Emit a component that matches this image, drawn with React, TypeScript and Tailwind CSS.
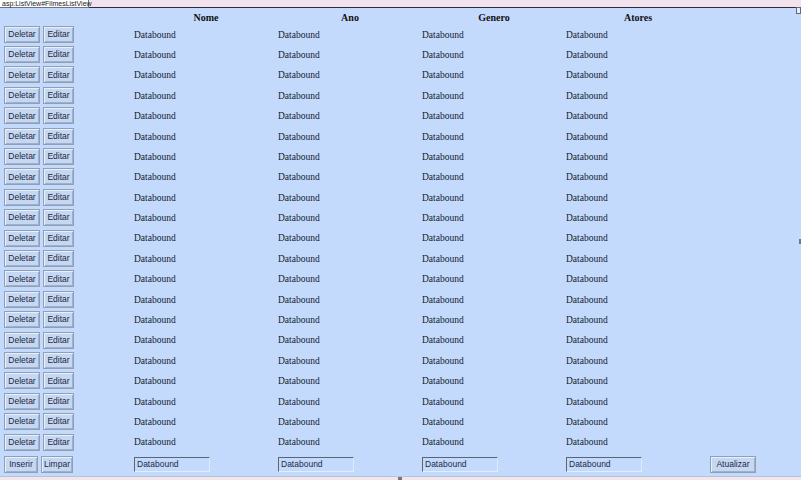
import React from "react";

// Designer view of an asp:ListView (Filmes) — bound placeholder rows.
const COLUMNS = ["Nome", "Ano", "Genero", "Atores"];
const ROWS = Array.from({ length: 21 }, (_, i) => i);

const serif = { fontFamily: '"Liberation Serif", "Times New Roman", serif' };
const sans = { fontFamily: '"Liberation Sans", Arial, sans-serif' };

function DesignButton({ label, className = "" }: { label: string; className?: string }) {
  return (
    <button
      style={sans}
      className={
        "h-[17px] border border-[#8e9fb8] bg-[#c6d7f2] text-[8.5px] leading-none text-[#1c2a44] shadow-[inset_1px_1px_0_#e8f0fc,inset_-1px_-1px_0_#9fb0c8] " +
        className
      }
    >
      {label}
    </button>
  );
}

function FieldBox() {
  return (
    <div
      style={sans}
      className="flex h-[15px] w-[76px] items-center border-t border-l border-t-[#5a6478] border-l-[#5a6478] border-b border-r border-b-[#e4ecf8] border-r-[#e4ecf8] pl-[2px] text-[8.5px] text-[#1c2a44]"
    >
      Databound
    </div>
  );
}

export default function App() {
  return (
    <div className="relative h-[480px] w-[801px] overflow-hidden bg-[#c3dafc]">
      {/* top designer strip */}
      <div className="flex h-[8px] items-stretch border-b border-[#2c2f3a] bg-[#f1e2ee]">
        <div
          style={sans}
          className="flex h-[8px] w-[89px] items-center overflow-visible border-r border-b border-[#6b7385] bg-white pl-[2px] text-[7px] leading-none text-[#222]"
        >
          asp:ListView#FilmesListView
        </div>
      </div>

      {/* header */}
      <div style={serif} className="flex h-[16px] items-center pt-[2px] text-[10px] font-bold text-[#111]">
        <div className="w-[134px]" />
        {COLUMNS.map((c) => (
          <div key={c} className="w-[144px] text-center">
            {c}
          </div>
        ))}
      </div>

      {/* bound rows */}
      {ROWS.map((r) => (
        <div key={r} className="flex h-[20.4px] items-center">
          <div className="flex w-[134px] gap-[3px] pl-[4px]">
            <DesignButton label="Deletar" className="w-[36px]" />
            <DesignButton label="Editar" className="w-[31px]" />
          </div>
          {COLUMNS.map((c) => (
            <div key={c} style={serif} className="w-[144px] pt-[1px] text-[9.5px] text-[#141a30]">
              Databound
            </div>
          ))}
        </div>
      ))}

      {/* insert row */}
      <div className="flex h-[24px] items-center pt-[1px]">
        <div className="flex w-[134px] gap-[3px] pl-[4px]">
          <DesignButton label="Inserir" className="w-[34px]" />
          <DesignButton label="Limpar" className="w-[32px]" />
        </div>
        {COLUMNS.map((c) => (
          <div key={c} className="w-[144px]">
            <FieldBox />
          </div>
        ))}
        <DesignButton label="Atualizar" className="w-[46px]" />
      </div>

      {/* bottom strip */}
      <div className="h-[4px] border-t border-[#b9c2d2] bg-[#f1e6ee]" />

      {/* designer glyphs on the edges */}
      <div className="absolute right-0 top-[7px] h-[7px] w-[5px] border border-[#5b6b86] bg-[#e8eef8]" />
      <div className="absolute right-0 top-[239px] h-[5px] w-[2px] bg-[#707888]" />
      <div className="absolute left-[398px] top-[477px] h-[3px] w-[4px] bg-[#6f7686]" />
    </div>
  );
}
